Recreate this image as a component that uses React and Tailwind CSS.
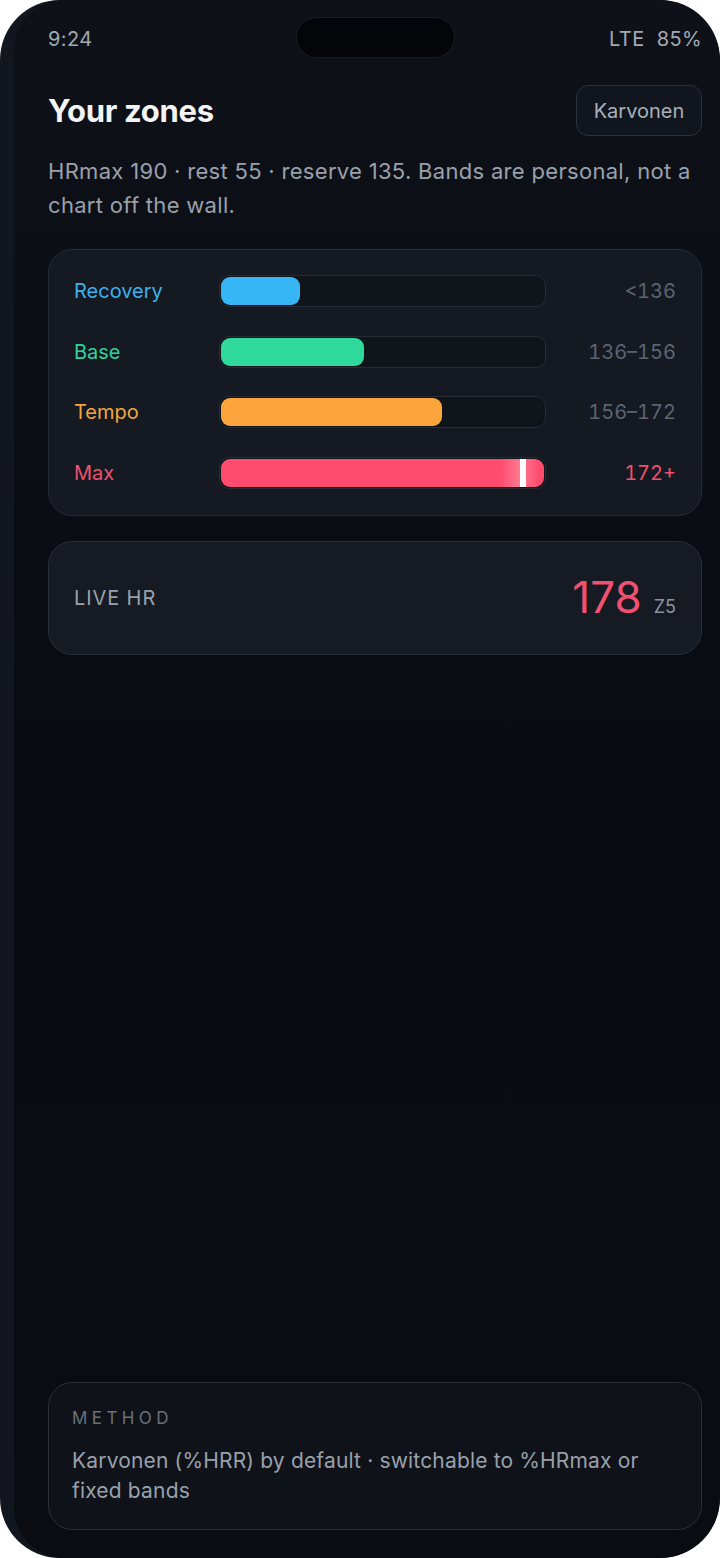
import React from "react";

const zones = [
  { name: "Recovery", label: "text-[#3db2ec]", fill: "bg-[#36b6f5]", pct: 24.5, range: "<136", rangeCls: "text-[#5d6470]" },
  { name: "Base", label: "text-[#33d19a]", fill: "bg-[#2fd99b]", pct: 44.3, range: "136–156", rangeCls: "text-[#5d6470]" },
  { name: "Tempo", label: "text-[#f6a53f]", fill: "bg-[#fca53c]", pct: 68.5, range: "156–172", rangeCls: "text-[#5d6470]" },
  { name: "Max", label: "text-[#ef4f6f]", fill: "bg-[#ff4b6e]", pct: 100, range: "172+", rangeCls: "text-[#f0506f]", marker: true },
];

export default function App() {
  return (
    <div className="w-[720px] h-[1558px] bg-white" style={{ fontFamily: "Inter, 'Noto Sans', sans-serif" }}>
      <div className="w-full h-full rounded-[60px] bg-[#12161e] pl-[14px] overflow-hidden">
        <div className="relative w-full h-full rounded-l-[50px] rounded-r-[60px] bg-gradient-to-b from-[#0e1118] via-[#090b11] to-[#0a0c12] flex flex-col pl-[34px] pr-[18px]">
          {/* status bar */}
          <div className="flex items-center justify-between h-[80px] pb-[2px] text-[20px] text-[#a3a9b3] tracking-[0.02em]">
            <span>9:24</span>
            <span>LTE&nbsp;&nbsp;85%</span>
          </div>
          <div className="absolute left-[282px] top-[17px] w-[159px] h-[41px] rounded-full bg-[#040508] border border-[#1a1d25]" />

          {/* header */}
          <div className="flex items-center justify-between mt-[5px]">
            <h1 className="text-[31px] font-bold text-[#f3f4f6] tracking-[-0.01em] leading-none">Your zones</h1>
            <div className="h-[51px] w-[126px] justify-center flex items-center rounded-[12px] border border-[#2b313c] bg-[#11151d] text-[20px] text-[#aab0ba]">
              Karvonen
            </div>
          </div>
          <p className="mt-[18px] text-[22px] leading-[34px] tracking-[0.014em] text-[#9aa1ac]">
            HRmax 190 · rest 55 · reserve 135. Bands are personal, not a chart off the wall.
          </p>

          {/* zones card */}
          <div className="mt-[27px] rounded-[24px] border border-[#262c37] bg-[#141922] pl-[25px] pr-[25px] pt-[25px] pb-[26px] flex flex-col gap-[28.5px]">
            {zones.map((z) => (
              <div key={z.name} className="flex items-center h-[32px]">
                <div className={`w-[145px] text-[20px] ${z.label}`}>{z.name}</div>
                <div className="relative w-[327px] h-[32px] rounded-[10px] border border-[#262c36] bg-[#10141b] p-[1px]">
                  <div
                    className={`relative h-full rounded-[9px] ${z.fill} overflow-hidden`}
                    style={{ width: `${z.pct}%` }}
                  >
                    {z.marker && (
                      <>
                        <div className="absolute top-0 bottom-0 right-[4px] w-[40px] bg-gradient-to-r from-transparent via-[#ff8ea3] to-transparent opacity-70" />
                        <div className="absolute top-0 bottom-0 right-[18px] w-[6px] bg-white" />
                      </>
                    )}
                  </div>
                </div>
                <div className={`flex-1 text-right text-[20px] tabular-nums ${z.rangeCls}`}>{z.range}</div>
              </div>
            ))}
          </div>

          {/* live hr */}
          <div className="mt-[25px] h-[114px] rounded-[24px] border border-[#2a303b] bg-[#151a23] px-[25px] flex items-center justify-between">
            <span className="text-[20px] text-[#9aa1ac] tracking-[0.045em]">LIVE HR</span>
            <div className="flex items-baseline gap-[12px]">
              <span className="text-[44px] text-[#f2506f] leading-none">178</span>
              <span className="text-[18px] text-[#8d94a0]">Z5</span>
            </div>
          </div>

          <div className="flex-1" />

          {/* method */}
          <div className="mb-[28px] rounded-[24px] border border-[#2a2f3a] bg-[#0f1219] pl-[23px] pr-[24px] pt-[23px] pb-[23px]">
            <div className="text-[17px] tracking-[0.26em] text-[#6a717c] leading-[24px]">METHOD</div>
            <p className="mt-[16px] text-[21px] leading-[30px] tracking-[0.008em] text-[#9aa1ab]">
              Karvonen (%HRR) by default · switchable to %HRmax or fixed bands
            </p>
          </div>
        </div>
      </div>
    </div>
  );
}
